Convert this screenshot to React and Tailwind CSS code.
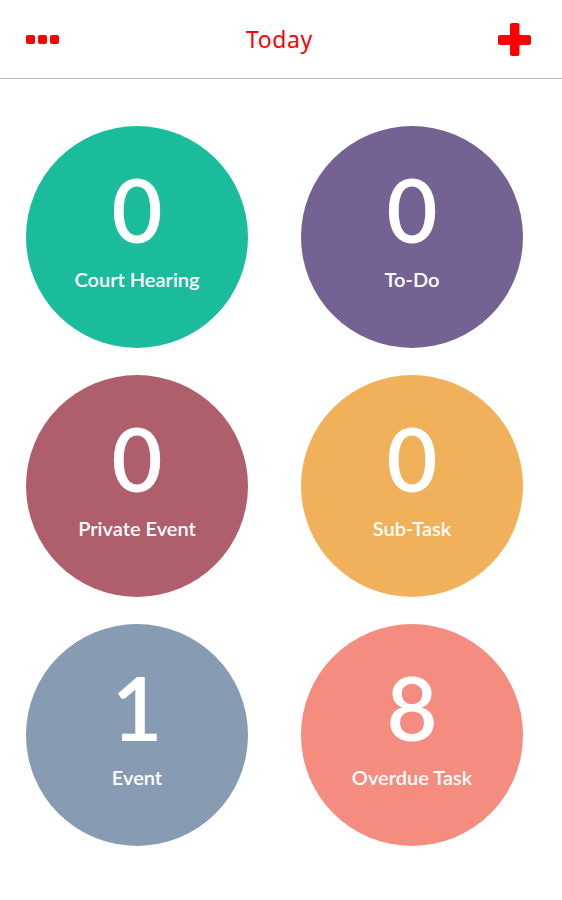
import React from "react";

const items = [
  { n: "0", label: "Court Hearing", bg: "bg-[#1bbc9b]" },
  { n: "0", label: "To-Do", bg: "bg-[#746392]" },
  { n: "0", label: "Private Event", bg: "bg-[#ae5f6b]" },
  { n: "0", label: "Sub-Task", bg: "bg-[#f0b15a]" },
  { n: "1", label: "Event", bg: "bg-[#879bb3]" },
  { n: "8", label: "Overdue Task", bg: "bg-[#f58c80]" },
];

export default function App() {
  return (
    <div className="w-[562px] h-[900px] bg-white" style={{ fontFamily: '"Noto Sans", "Open Sans", sans-serif' }}>
      <header className="h-[79px] border-b border-[#bcbcbc] flex items-center justify-between pl-[26px] pr-[31px]">
        <div className="flex gap-[3px]">
          <div className="w-[9px] h-[9px] rounded-[2px] bg-[#ff0000]" />
          <div className="w-[9px] h-[9px] rounded-[2px] bg-[#ff0000]" />
          <div className="w-[9px] h-[9px] rounded-[2px] bg-[#ff0000]" />
        </div>
        <h1 className="text-[23px] leading-none text-[#ff0000] tracking-[0.6px] pl-[2px]">Today</h1>
        <svg width="33" height="33" viewBox="0 0 33 33">
          <rect x="0" y="12" width="33" height="10" rx="2" fill="#ff0000" />
          <rect x="12" y="0" width="9.5" height="33" rx="2" fill="#ff0000" />
        </svg>
      </header>
      <div className="grid grid-cols-[222px_222px] gap-x-[53px] gap-y-[27px] pl-[26px] pt-[47px]">
        {items.map((it, i) => (
          <div key={i} className={`w-[222px] h-[222px] rounded-full ${it.bg} flex flex-col items-center pt-[39px] text-white font-[Lato]`}>
            <div className="text-[88px] leading-none font-semibold">{it.n}</div>
            <div className="mt-[16px] text-[20px] leading-none font-semibold">{it.label}</div>
          </div>
        ))}
      </div>
    </div>
  );
}
